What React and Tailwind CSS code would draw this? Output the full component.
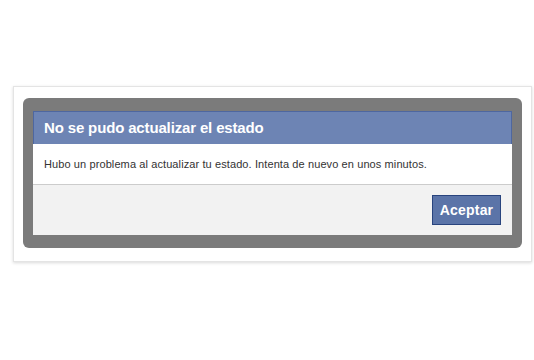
export default function App() {
  return (
    <div className="w-[534px] h-[360px] bg-white pt-[86px] pl-[13px]">
      <div className="w-[519px] h-[176px] bg-white border border-[#e4e4e4] shadow-[0_1px_3px_rgba(0,0,0,0.15)] pt-[11px] pl-[9px]">
        <div className="w-[499px] h-[150px] rounded-[6px] bg-[#7b7b7b] px-[10px] pt-[13px] pb-[13px]">
          <div className="flex flex-col h-full bg-white font-['Liberation_Sans',Arial,sans-serif]">
            <div className="h-[33px] bg-[#6d84b4] border border-[#4e67a0] border-b-0 flex items-center pl-[10px]">
              <span className="text-white font-bold text-[15px] tracking-[-0.15px]">
                No se pudo actualizar el estado
              </span>
            </div>
            <div className="h-[41px] flex items-center pl-[11px] border-b border-[#cccccc]">
              <span className="text-[#333333] text-[11px] tracking-[0.1px]">
                Hubo un problema al actualizar tu estado. Intenta de nuevo en unos minutos.
              </span>
            </div>
            <div className="flex-1 bg-[#f2f2f2] flex items-center justify-end pr-[11px]">
              <button className="w-[69px] h-[30px] bg-[#5b74a8] border border-[#29447e] text-white font-bold text-[14px] tracking-[0.2px] flex items-center justify-center">
                Aceptar
              </button>
            </div>
          </div>
        </div>
      </div>
    </div>
  );
}
